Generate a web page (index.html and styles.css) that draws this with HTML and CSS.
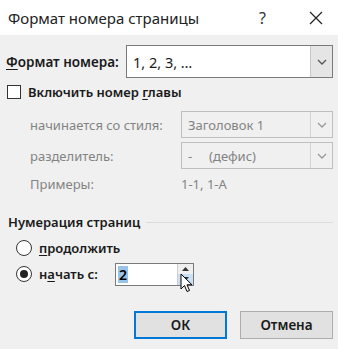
FILE: index.html
```html
<!DOCTYPE html>
<html lang="ru">
<head>
  <meta charset="UTF-8" />
  <title>Формат номера страницы</title>
  <link rel="stylesheet" href="styles.css">
</head>
<body>

  <div class="dialog">
    <div class="titlebar">
      <span class="title">Формат номера страницы</span>
      <span class="help">?</span>
      <svg class="close" width="14" height="14" viewBox="0 0 14 14">
        <path d="M1 1 L13 13 M13 1 L1 13" stroke="#222" stroke-width="1.2" fill="none" />
      </svg>
    </div>

    <div class="content">
      <div class="format-row">
        <label class="strong"><u>Ф</u>ормат номера:</label>
        <div class="select big">
          <span class="value">1, 2, 3, …</span>
          <span class="arrow"><svg width="10" height="6" viewBox="0 0 10 6"><path d="M1 1 L5 5 L9 1" stroke="#555" stroke-width="1.3" fill="none" /></svg></span>
        </div>
      </div>

      <div class="check-row">
        <span class="checkbox"></span>
        <span class="strong">Включить номер <u>г</u>лавы</span>
      </div>

      <div class="chapter">
        <span class="muted">начинается со стиля:</span>
        <div class="select disabled">
          <span class="value">Заголовок 1</span>
          <span class="arrow"><svg width="10" height="6" viewBox="0 0 10 6"><path d="M1 1 L5 5 L9 1" stroke="#999" stroke-width="1.3" fill="none" /></svg></span>
        </div>
        <span class="muted">разделитель:</span>
        <div class="select disabled">
          <span class="value">-&nbsp;&nbsp;&nbsp;&nbsp;&nbsp;(дефис)</span>
          <span class="arrow"><svg width="10" height="6" viewBox="0 0 10 6"><path d="M1 1 L5 5 L9 1" stroke="#999" stroke-width="1.3" fill="none" /></svg></span>
        </div>
        <span class="muted">Примеры:</span>
        <span class="muted example">1-1, 1-А</span>
      </div>

      <div class="group-title">
        <span class="strong">Нумерация страниц</span>
        <span class="rule"></span>
      </div>

      <div class="radio-row first">
        <span class="radio"></span>
        <span class="strong"><u>п</u>родолжить</span>
      </div>
      <div class="radio-row">
        <span class="radio on"></span>
        <span class="strong start-label">н<u>а</u>чать с:</span>
        <div class="spinner">
          <span class="spin-value"><span class="selected">2</span></span>
          <span class="spin-buttons">
            <span class="spin-btn"><svg width="7" height="4" viewBox="0 0 7 4"><path d="M0 4 L3.5 0 L7 4 Z" fill="#333" /></svg></span>
            <span class="spin-btn hover"><svg width="7" height="4" viewBox="0 0 7 4"><path d="M0 0 L3.5 4 L7 0 Z" fill="#333" /></svg></span>
          </span>
          <svg class="cursor" width="14" height="21" viewBox="0 0 14 21">
            <path d="M1 1 L1 16 L4.5 12.5 L7 18.5 L9.5 17.5 L7 11.8 L12 11.8 Z" fill="#fff" stroke="#000" stroke-width="1" stroke-linejoin="round" />
          </svg>
        </div>
      </div>

      <div class="buttons">
        <button class="btn default">ОК</button>
        <button class="btn">Отмена</button>
      </div>
    </div>
  </div>

</body>
</html>
```

FILE: styles.css
```css
body {
  margin: 0;
  background: #f0f0f0;
  font-family: 'Noto Sans', 'Open Sans', sans-serif;
  font-size: 13px;
  color: #1a1a1a;
}
.dialog {
  width: 338px;
  height: 349px;
  background: #f0f0f0;
  overflow: hidden;
}
.titlebar {
  height: 35px;
  background: #fff;
  display: flex;
  align-items: center;
  padding-left: 8px;
}
.title {
  font-size: 15px;
  flex: 1;
  color: #222;
}
.help {
  font-size: 16px;
  color: #333;
  margin-right: 43px;
}
.close {
  margin-right: 15px;
}
.content {
  padding: 10px 5px 0 6px;
}
.strong {
  font-weight: 600;
}
u {
  text-decoration-thickness: 1px;
  text-underline-offset: 2px;
}
.format-row {
  display: flex;
  align-items: center;
  height: 33px;
}
.format-row label {
  width: 120px;
  font-size: 13.5px;
}
.select {
  flex: 1;
  display: flex;
  height: 27px;
  border: 1px solid #7a7a7a;
  background: #fff;
  box-sizing: border-box;
}
.select.big {
  height: 33px;
  font-size: 14.5px;
}
.select .value {
  flex: 1;
  display: flex;
  align-items: center;
  padding-left: 6px;
}
.select .arrow {
  width: 21px;
  display: flex;
  align-items: center;
  justify-content: center;
  background: #e5e5e5;
  border-left: 1px solid #c8c8c8;
}
.select.disabled {
  border-color: #bfbfbf;
  background: #f0f0f0;
  color: #838383;
}
.select.disabled .arrow {
  background: #f0f0f0;
  border-left-color: #d4d4d4;
}
.check-row {
  display: flex;
  align-items: center;
  margin-top: 7px;
  height: 14px;
  padding-left: 1px;
}
.checkbox {
  width: 12px;
  height: 12px;
  border: 1px solid #333;
  background: #fff;
  margin-right: 7px;
}
.chapter {
  display: grid;
  grid-template-columns: 151px 1fr;
  grid-template-rows: 27px 27px 22px;
  row-gap: 4px;
  align-items: center;
  padding-left: 24px;
  margin-top: 12px;
  color: #838383;
}
.group-title {
  display: flex;
  align-items: center;
  margin-top: 18px;
  padding-left: 2px;
}
.group-title .rule {
  flex: 1;
  height: 1px;
  background: #dcdcdc;
  margin-left: 6px;
}
.radio-row {
  display: flex;
  align-items: center;
  height: 22px;
  margin-top: 4px;
  padding-left: 10px;
}
.radio-row.first {
  margin-top: 6px;
}
.radio {
  width: 14px;
  height: 14px;
  border: 1px solid #333;
  border-radius: 50%;
  background: #fff;
  margin-right: 7px;
  display: flex;
  align-items: center;
  justify-content: center;
}
.radio.on::after {
  content: '';
  width: 8px;
  height: 8px;
  border-radius: 50%;
  background: #222;
}
.start-label {
  width: 76px;
}
.spinner {
  position: relative;
  display: flex;
  width: 79px;
  height: 23px;
  border: 1px solid #7a7a7a;
  background: #fff;
  box-sizing: border-box;
}
.spin-value {
  flex: 1;
  display: flex;
  align-items: center;
  padding-left: 2px;
}
.selected {
  background: #99c4ea;
  color: #000;
  font-weight: 600;
  font-size: 14px;
  line-height: 17px;
  padding: 0 1px;
}
.spin-buttons {
  width: 16px;
  display: flex;
  flex-direction: column;
}
.spin-btn {
  flex: 1;
  display: flex;
  align-items: center;
  justify-content: center;
  background: #efefef;
  border-left: 1px solid #cfcfcf;
}
.spin-btn.hover {
  background: #c9e0f7;
}
.cursor {
  position: absolute;
  left: 64px;
  top: 9px;
}
.buttons {
  display: flex;
  justify-content: flex-end;
  gap: 13px;
  margin-top: 26px;
}
.btn {
  width: 93px;
  height: 28px;
  border: 1px solid #adadad;
  background: #e1e1e1;
  font-family: inherit;
  font-size: 13.5px;
  font-weight: 600;
  color: #1a1a1a;
  padding: 0;
}
.btn.default {
  border: 2px solid #0078d7;
}
```
